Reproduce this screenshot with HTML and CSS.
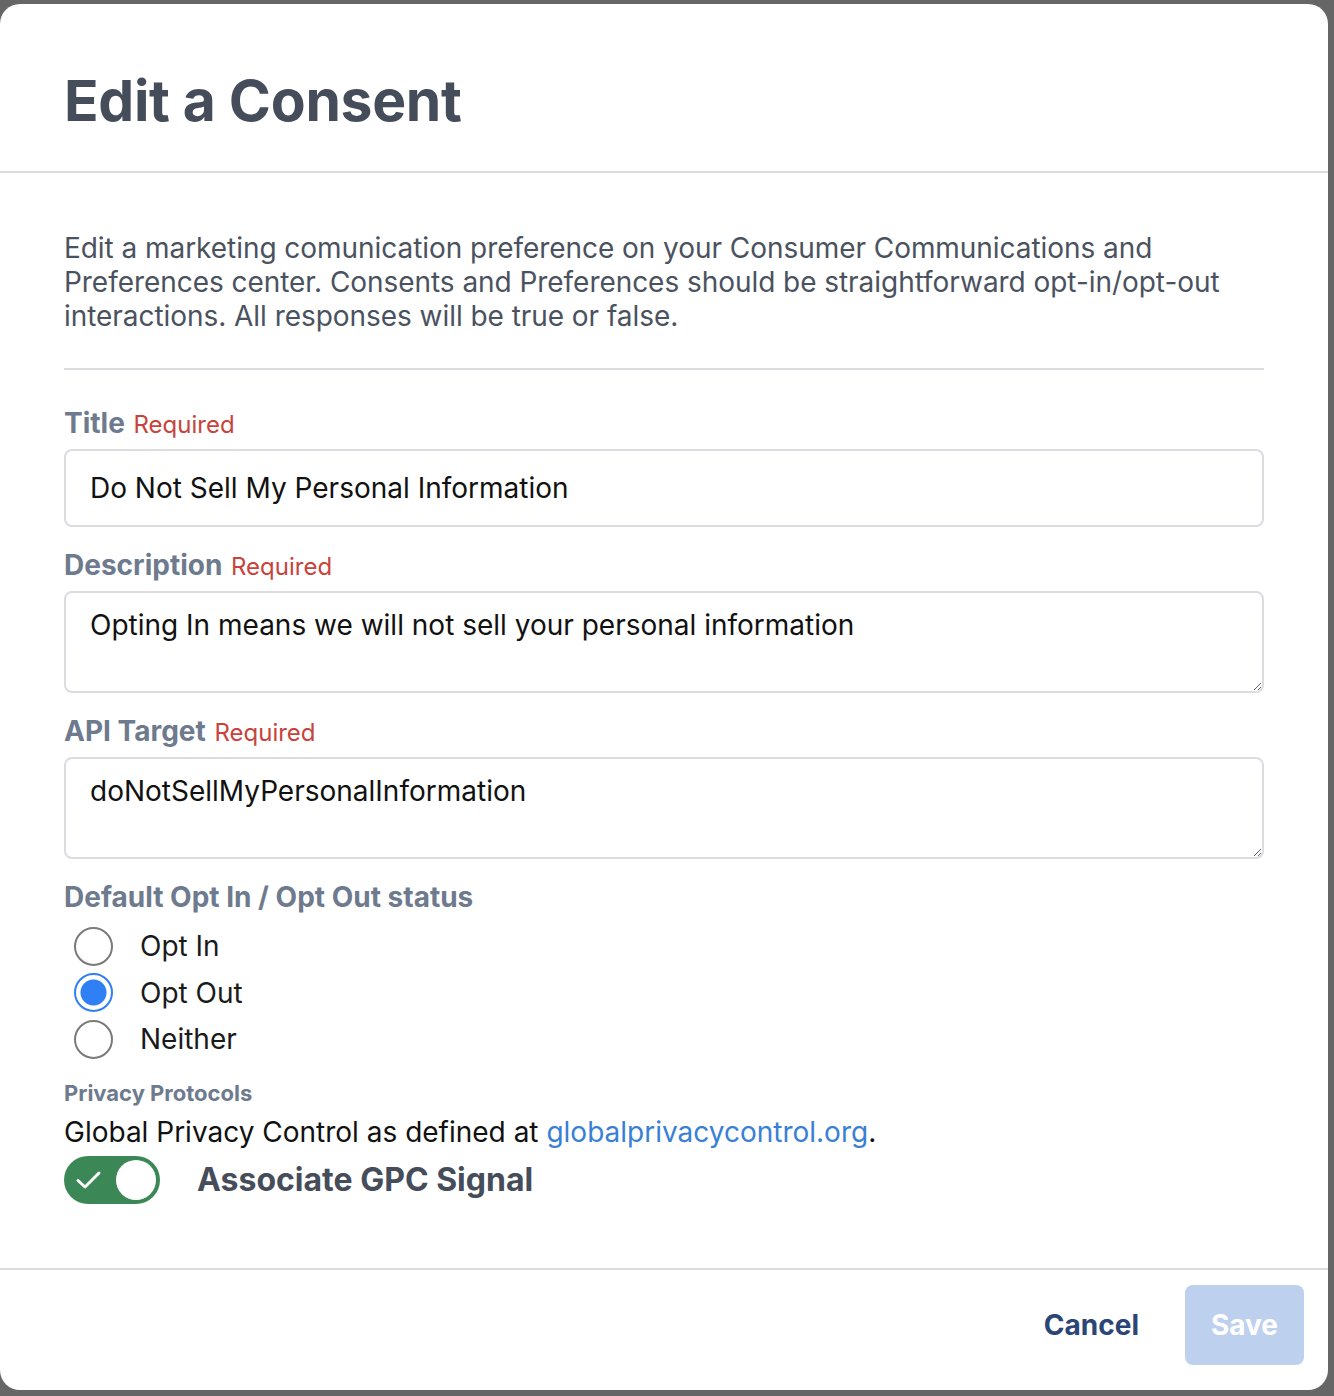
FILE: index.html
```html
<!DOCTYPE html>
<html>
<head>
<meta charset="utf-8">
<link rel="stylesheet" href="styles.css">
</head>
<body>
<div class="modal">
  <header class="modal-header">
    <h1 class="modal-title">Edit a Consent</h1>
  </header>
  <section class="modal-body">
    <p class="intro">Edit a marketing comunication preference on your Consumer Communications and Preferences center. Consents and Preferences should be straightforward opt-in/opt-out interactions. All responses will be true or false.</p>
    <hr class="divider">
    <div class="field">
      <label class="label">Title <span class="req">Required</span></label>
      <input class="input" type="text" value="Do Not Sell My Personal Information">
    </div>
    <div class="field">
      <label class="label">Description <span class="req">Required</span></label>
      <textarea class="textarea">Opting In means we will not sell your personal information</textarea>
    </div>
    <div class="field">
      <label class="label">API Target <span class="req">Required</span></label>
      <textarea class="textarea">doNotSellMyPersonalInformation</textarea>
    </div>
    <div class="field field-radios">
      <div class="label">Default Opt In / Opt Out status</div>
      <div class="radios">
        <label class="radio-row"><input class="radio" type="radio" name="opt"><span>Opt In</span></label>
        <label class="radio-row"><input class="radio" type="radio" name="opt" checked><span>Opt Out</span></label>
        <label class="radio-row"><input class="radio" type="radio" name="opt"><span>Neither</span></label>
      </div>
    </div>
    <div class="privacy">
      <div class="small-label">Privacy Protocols</div>
      <div class="gpc-text">Global Privacy Control as defined at <a class="link" href="#">globalprivacycontrol.org</a>.</div>
      <div class="toggle-row">
        <span class="toggle">
          <svg class="check" width="28" height="20" viewBox="0 0 28 20"><path d="M3 10.5 L10 17 L24 3" fill="none" stroke="#fff" stroke-width="3" stroke-linecap="round" stroke-linejoin="round"/></svg>
          <span class="knob"></span>
        </span>
        <span class="toggle-label">Associate GPC Signal</span>
      </div>
    </div>
  </section>
  <footer class="modal-footer">
    <button class="btn-cancel">Cancel</button>
    <button class="btn-save">Save</button>
  </footer>
</div>
</body>
</html>
```

FILE: styles.css
```css
html, body {
  margin: 0;
  padding: 0;
  background: #666666;
  font-family: Inter, "Noto Sans", "Liberation Sans", sans-serif;
}
.modal {
  margin-top: 4px;
  width: 1328px;
  height: 1386px;
  background: #ffffff;
  border-radius: 20px;
  display: flex;
  flex-direction: column;
  box-sizing: border-box;
  overflow: hidden;
}
.modal-header {
  height: 169px;
  border-bottom: 2px solid #dcdce0;
  box-sizing: border-box;
  display: flex;
  align-items: center;
  padding: 0 64px;
}
.modal-title {
  margin: 0;
  font-size: 57px;
  font-weight: 700;
  color: #464d5a;
  letter-spacing: -0.3px;
  padding-top: 26px;
}
.modal-body {
  flex: 1;
  padding: 58px 64px 0 64px;
}
.intro {
  margin: 0;
  font-size: 28px;
  line-height: 34px;
  color: #4a5260;
  letter-spacing: -0.05px;
}
.divider {
  border: 0;
  border-top: 2px solid #dcdce0;
  margin: 35px 0 35px 0;
  width: 1200px;
}
.field {
  margin-bottom: 20px;
}
.field-radios {
  margin-bottom: 14px;
}
.label {
  display: block;
  font-size: 28px;
  font-weight: 700;
  line-height: 36px;
  color: #6e7a8e;
  margin-bottom: 6px;
}
.req {
  font-size: 24px;
  font-weight: 400;
  color: #c8433c;
  margin-left: 2px;
}
.input, .textarea {
  display: block;
  width: 1200px;
  box-sizing: border-box;
  border: 2px solid #dcdce0;
  border-radius: 8px;
  font-family: Inter, "Noto Sans", "Liberation Sans", sans-serif;
  font-size: 28px;
  color: #111111;
  padding: 0 24px;
  outline: none;
  background: #fff;
}
.input {
  height: 78px;
}
.textarea {
  height: 102px;
  padding-top: 15px;
  line-height: 34px;
  resize: vertical;
}
.radios {
  display: flex;
  flex-direction: column;
  padding-top: 2px;
}
.radio-row {
  height: 46.5px;
  display: flex;
  align-items: center;
  font-size: 28px;
  color: #1a1a1a;
}
.radio {
  appearance: none;
  -webkit-appearance: none;
  width: 39px;
  height: 39px;
  margin: 0 27px 0 10px;
  border: 2px solid #7a7a7a;
  border-radius: 50%;
  box-sizing: border-box;
  background: #fff;
}
.radio:checked {
  border-color: #2f7ff5;
  background: radial-gradient(circle, #2f7ff5 0, #2f7ff5 12.5px, #ffffff 13.5px);
}
.small-label {
  font-size: 22px;
  font-weight: 700;
  line-height: 32px;
  color: #6e7a8e;
  margin-bottom: 3px;
}
.gpc-text {
  font-size: 28px;
  line-height: 40px;
  color: #111111;
}
.link {
  color: #3a7fd5;
  text-decoration: none;
}
.toggle-row {
  display: flex;
  align-items: center;
  margin-top: 4px;
}
.toggle {
  width: 96px;
  height: 48px;
  border-radius: 24px;
  background: #3b8856;
  display: flex;
  align-items: center;
  justify-content: space-between;
  padding: 0 4px 0 11px;
  box-sizing: border-box;
}
.check {
  display: block;
}
.knob {
  width: 40px;
  height: 40px;
  border-radius: 50%;
  background: #fff;
}
.toggle-label {
  margin-left: 37px;
  font-size: 32px;
  font-weight: 700;
  color: #464d5a;
}
.modal-footer {
  height: 122px;
  border-top: 2px solid #dcdce0;
  box-sizing: border-box;
  display: flex;
  align-items: flex-start;
  justify-content: flex-end;
  padding: 15px 24px 0 0;
}
.btn-cancel {
  border: 0;
  background: transparent;
  font-family: Inter, "Noto Sans", "Liberation Sans", sans-serif;
  font-size: 28px;
  font-weight: 700;
  color: #2b4676;
  height: 80px;
  padding: 0;
  margin-right: 46px;
}
.btn-save {
  border: 0;
  background: #bdd1ee;
  border-radius: 8px;
  width: 119px;
  height: 80px;
  font-family: Inter, "Noto Sans", "Liberation Sans", sans-serif;
  font-size: 28px;
  font-weight: 700;
  color: #ffffff;
}
```
